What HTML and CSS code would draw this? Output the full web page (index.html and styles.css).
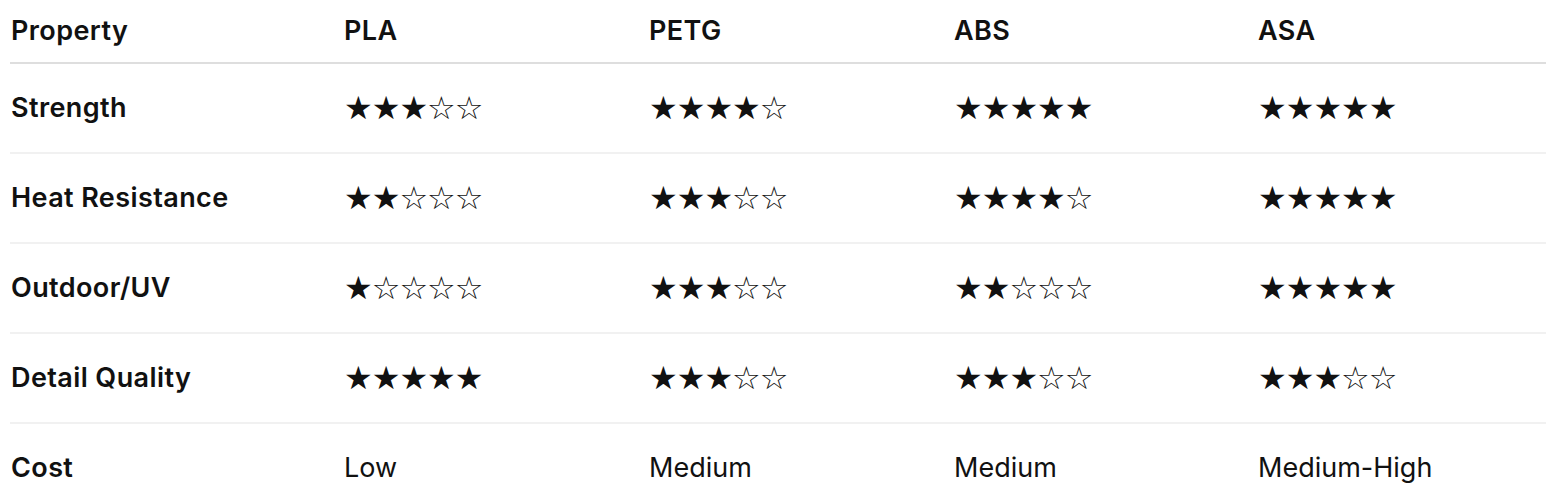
FILE: index.html
```html
<!DOCTYPE html>
<html lang="en">
<head>
<meta charset="utf-8">
<title>Filament comparison</title>
<link rel="stylesheet" href="styles.css">
</head>
<body>
<table class="cmp">
  <colgroup>
    <col class="c-prop"><col class="c-mat"><col class="c-mat"><col class="c-mat3"><col class="c-last">
  </colgroup>
  <thead>
    <tr><th>Property</th><th>PLA</th><th>PETG</th><th>ABS</th><th>ASA</th></tr>
  </thead>
  <tbody>
    <tr><th>Strength</th><td class="stars">★★★☆☆</td><td class="stars">★★★★☆</td><td class="stars">★★★★★</td><td class="stars">★★★★★</td></tr>
    <tr><th>Heat Resistance</th><td class="stars">★★☆☆☆</td><td class="stars">★★★☆☆</td><td class="stars">★★★★☆</td><td class="stars">★★★★★</td></tr>
    <tr><th>Outdoor/UV</th><td class="stars">★☆☆☆☆</td><td class="stars">★★★☆☆</td><td class="stars">★★☆☆☆</td><td class="stars">★★★★★</td></tr>
    <tr><th>Detail Quality</th><td class="stars">★★★★★</td><td class="stars">★★★☆☆</td><td class="stars">★★★☆☆</td><td class="stars">★★★☆☆</td></tr>
    <tr><th>Cost</th><td>Low</td><td>Medium</td><td>Medium</td><td>Medium-High</td></tr>
  </tbody>
</table>
</body>
</html>
```

FILE: styles.css
```css
html, body {
  margin: 0;
  padding: 0;
  background: #ffffff;
}
body {
  font-family: Inter, "Noto Sans", "Liberation Sans", sans-serif;
  color: #111111;
}
.cmp {
  margin-left: 10px;
  width: 1536px;
  border-collapse: collapse;
  table-layout: fixed;
  font-size: 27px;
}
.c-prop { width: 333px; }
.c-mat { width: 305px; }
.c-mat3 { width: 304px; }
.c-last { width: 289px; }
.cmp th, .cmp td {
  text-align: left;
  padding: 0 0 0 1px;
  vertical-align: middle;
  line-height: 1.2;
}
.cmp th {
  font-weight: 600;
  letter-spacing: 0.4px;
}
.cmp td { font-weight: 400; }
.cmp thead tr {
  height: 63px;
  border-bottom: 2px solid #dedede;
}
.cmp tbody tr {
  height: 90px;
  border-bottom: 2px solid #f1f1f1;
}
.cmp tbody tr:last-child { border-bottom: none; }
.stars {
  font-family: "DejaVu Sans", sans-serif;
  font-size: 32px;
  letter-spacing: -1px;
  line-height: 1;
}
```
